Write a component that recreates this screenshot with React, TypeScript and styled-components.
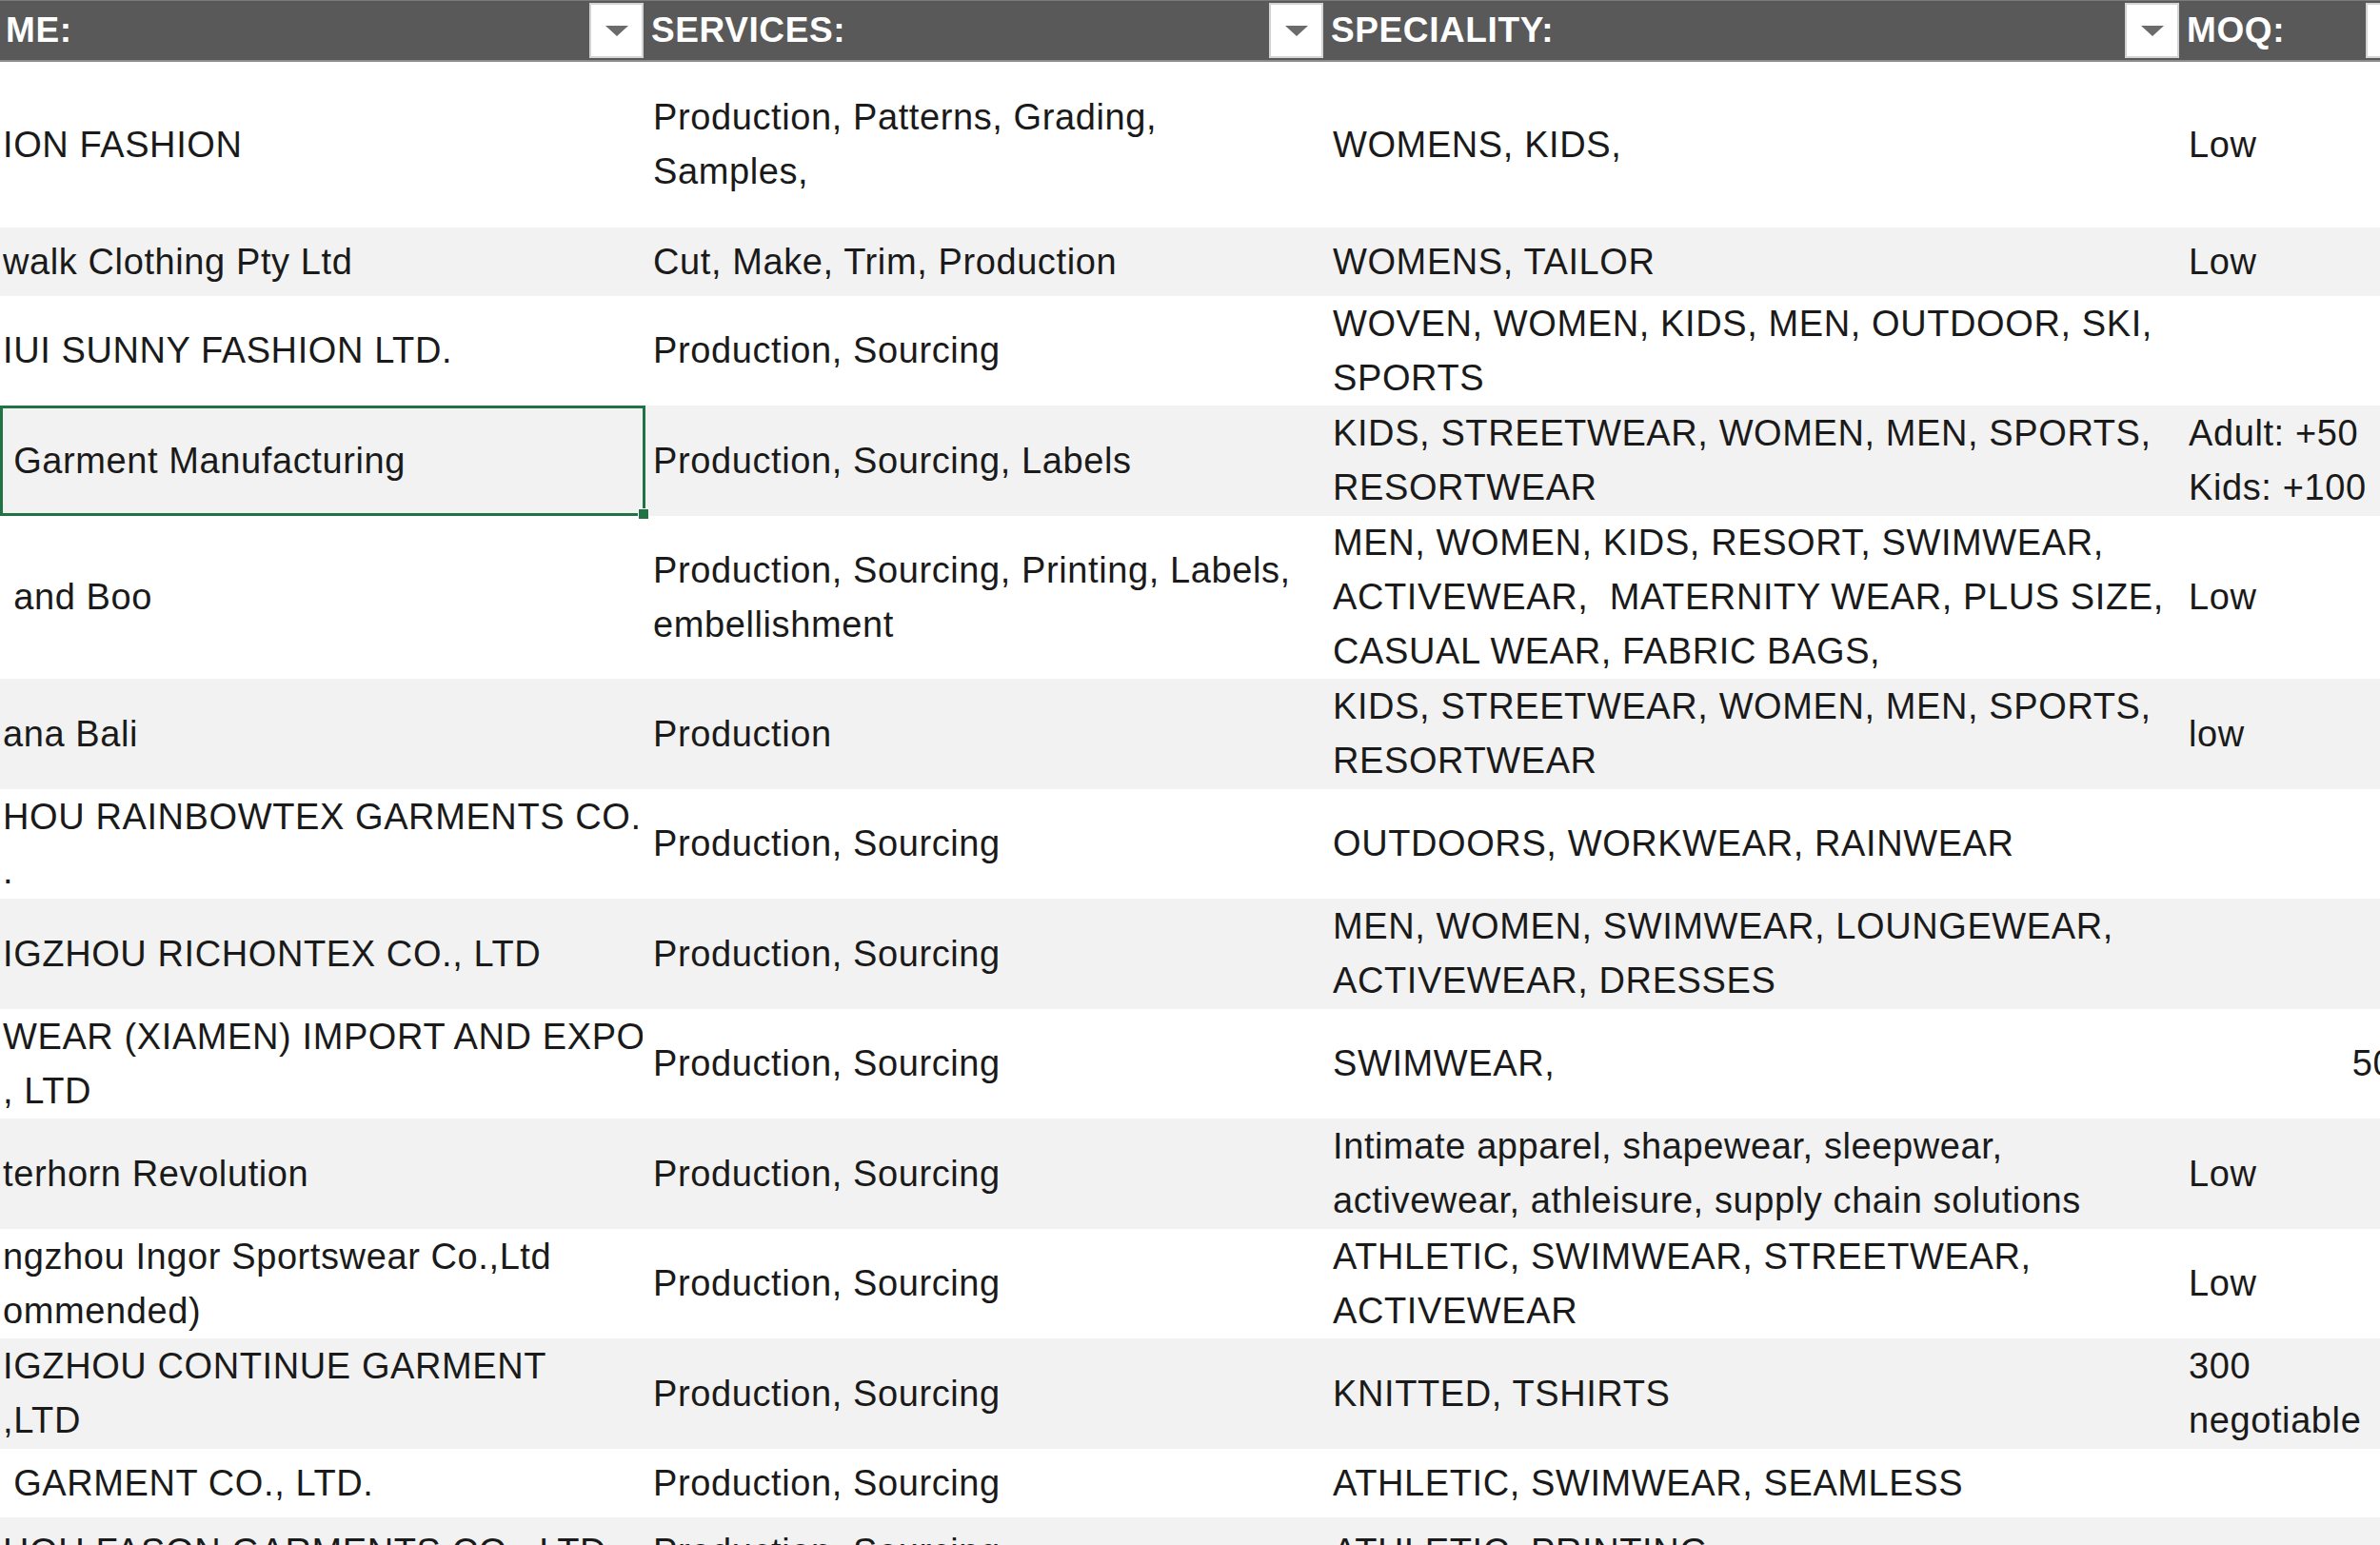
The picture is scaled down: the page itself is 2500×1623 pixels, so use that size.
import React from 'react';
import styled, { createGlobalStyle } from 'styled-components';

const GlobalStyle = createGlobalStyle`
  html, body {
    margin: 0;
    padding: 0;
    background: #ffffff;
    overflow: hidden;
  }
  body {
    font-family: 'Liberation Sans', Arial, sans-serif;
  }
`;

const COLS = '678px 714px 899px 253px';

type RowData = {
  height: number;
  cells: [string, string, string, string];
  alignLast?: 'left' | 'right';
  selected?: boolean;
};

const rows: RowData[] = [
  { height: 174, cells: ['ION FASHION', 'Production, Patterns, Grading,\nSamples,', 'WOMENS, KIDS,', 'Low'] },
  { height: 72, cells: ['walk Clothing Pty Ltd', 'Cut, Make, Trim, Production', 'WOMENS, TAILOR', 'Low'] },
  { height: 115, cells: ['IUI SUNNY FASHION LTD.', 'Production, Sourcing', 'WOVEN, WOMEN, KIDS, MEN, OUTDOOR, SKI,\nSPORTS', ''] },
  { height: 116, selected: true, cells: [' Garment Manufacturing', 'Production, Sourcing, Labels', 'KIDS, STREETWEAR, WOMEN, MEN, SPORTS,\nRESORTWEAR', 'Adult: +50\nKids: +100'] },
  { height: 171, cells: [' and Boo', 'Production, Sourcing, Printing, Labels,\nembellishment', 'MEN, WOMEN, KIDS, RESORT, SWIMWEAR,\nACTIVEWEAR,  MATERNITY WEAR, PLUS SIZE,\nCASUAL WEAR, FABRIC BAGS,', 'Low'] },
  { height: 116, cells: ['ana Bali', 'Production', 'KIDS, STREETWEAR, WOMEN, MEN, SPORTS,\nRESORTWEAR', 'low'] },
  { height: 115, cells: ['HOU RAINBOWTEX GARMENTS CO.,\n.', 'Production, Sourcing', 'OUTDOORS, WORKWEAR, RAINWEAR', ''] },
  { height: 116, cells: ['IGZHOU RICHONTEX CO., LTD', 'Production, Sourcing', 'MEN, WOMEN, SWIMWEAR, LOUNGEWEAR,\nACTIVEWEAR, DRESSES', ''] },
  { height: 115, alignLast: 'right', cells: ['WEAR (XIAMEN) IMPORT AND EXPORT\n, LTD', 'Production, Sourcing', 'SWIMWEAR,', '500'] },
  { height: 116, cells: ['terhorn Revolution', 'Production, Sourcing', 'Intimate apparel, shapewear, sleepwear,\nactivewear, athleisure, supply chain solutions', 'Low'] },
  { height: 115, cells: ['ngzhou Ingor Sportswear Co.,Ltd\nommended)', 'Production, Sourcing', 'ATHLETIC, SWIMWEAR, STREETWEAR,\nACTIVEWEAR', 'Low'] },
  { height: 116, cells: ['IGZHOU CONTINUE GARMENT\n,LTD', 'Production, Sourcing', 'KNITTED, TSHIRTS', '300\nnegotiable'] },
  { height: 72, cells: [' GARMENT CO., LTD.', 'Production, Sourcing', 'ATHLETIC, SWIMWEAR, SEAMLESS', ''] },
  { height: 72, cells: ['HOU FASON GARMENTS CO., LTD', 'Production, Sourcing', 'ATHLETIC, PRINTING', ''] },
];

const headers = ['ME:', 'SERVICES:', 'SPECIALITY:', 'MOQ:'];

export default function App() {
  return (
    <>
      <GlobalStyle />
      <Sheet>
        <HeaderRow>
          {headers.map((h) => (
            <HeaderCell key={h}>
              <HeaderLabel>{h}</HeaderLabel>
              <FilterButton>
                <Arrow />
              </FilterButton>
            </HeaderCell>
          ))}
        </HeaderRow>
        {rows.map((r, i) => (
          <Row key={i} $height={r.height} $shade={i % 2 === 1}>
            {r.cells.map((c, j) => (
              <Cell
                key={j}
                $first={j === 0}
                $align={j === 3 ? r.alignLast || 'left' : 'left'}
                $selected={j === 0 && !!r.selected}
              >
                {c}
                {j === 0 && r.selected && <Handle />}
              </Cell>
            ))}
          </Row>
        ))}
      </Sheet>
    </>
  );
}

const Sheet = styled.div`
  width: 2500px;
  height: 1623px;
  overflow: hidden;
`;

const HeaderRow = styled.div`
  display: grid;
  grid-template-columns: ${COLS};
  height: 65px;
  background: #595959;
  border-top: 1px solid #7a7a7a;
  border-bottom: 2px solid #8c8c8c;
  box-sizing: border-box;
`;

const HeaderCell = styled.div`
  display: flex;
  align-items: center;
  justify-content: space-between;
  padding-left: 6px;
  padding-right: 2px;
`;

const HeaderLabel = styled.span`
  color: #ffffff;
  font-weight: 700;
  font-size: 37px;
  letter-spacing: 0.6px;
`;

const FilterButton = styled.div`
  width: 57px;
  height: 58px;
  background: #ffffff;
  border: 2px solid #d4d4d4;
  box-sizing: border-box;
  display: flex;
  align-items: center;
  justify-content: center;
`;

const Arrow = styled.div`
  width: 0;
  height: 0;
  border-left: 12px solid transparent;
  border-right: 12px solid transparent;
  border-top: 11px solid #6b6b6b;
`;

const Row = styled.div<{ $height: number; $shade: boolean }>`
  display: grid;
  grid-template-columns: ${COLS};
  height: ${({ $height }) => $height}px;
  background: ${({ $shade }) => ($shade ? '#f2f2f2' : '#ffffff')};
`;

const Cell = styled.div<{ $first: boolean; $align: 'left' | 'right'; $selected: boolean }>`
  position: relative;
  display: flex;
  align-items: center;
  justify-content: ${({ $align }) => ($align === 'right' ? 'flex-end' : 'flex-start')};
  padding: 0 ${({ $first }) => ($first ? '0' : '5px')};
  font-size: 38px;
  letter-spacing: 0.6px;
  line-height: 57px;
  color: #1a1a1a;
  white-space: pre;
  box-sizing: border-box;
  border: ${({ $selected }) => ($selected ? '3px solid #217346' : '3px solid transparent')};
  overflow: ${({ $selected }) => ($selected ? 'visible' : 'hidden')};
`;

const Handle = styled.div`
  position: absolute;
  right: -7px;
  bottom: -7px;
  width: 10px;
  height: 10px;
  background: #217346;
  border: 1px solid #ffffff;
`;
